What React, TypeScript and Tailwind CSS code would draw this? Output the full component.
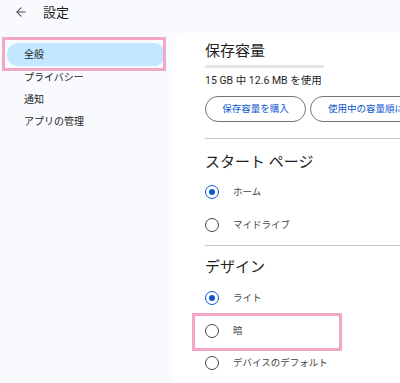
import { ArrowLeft } from "lucide-react";

const font = { fontFamily: '"Roboto", "Noto Sans CJK JP", sans-serif' };

function Radio({ label, checked }: { label: string; checked?: boolean }) {
  return (
    <div className="flex h-[32.5px] items-center">
      {checked ? (
        <span className="flex h-[14px] w-[14px] items-center justify-center rounded-full border-[1.8px] border-[#0b57d0]">
          <span className="h-[6px] w-[6px] rounded-full bg-[#0b57d0]" />
        </span>
      ) : (
        <span className="h-[14px] w-[14px] rounded-full border-[1.8px] border-[#444746]" />
      )}
      <span className="ml-[14px] text-[9.5px] text-[#444746]">{label}</span>
    </div>
  );
}

export default function App() {
  const nav = ["プライバシー", "通知", "アプリの管理"];

  return (
    <div className="h-[383px] w-[400px] overflow-hidden bg-[#f8fafd] text-[#1f1f1f]" style={font}>
      {/* header */}
      <div className="flex h-[24px] items-center pl-[14px]">
        <ArrowLeft size={14} strokeWidth={1.8} className="text-[#444746]" />
        <span className="ml-[15px] text-[13px] leading-none">設定</span>
      </div>

      <div className="mt-[9px] flex">
        {/* sidebar */}
        <div className="relative w-[172px] shrink-0 pt-[10px]">
          <div className="mx-[7px] flex h-[23px] items-center rounded-full bg-[#c2e7ff] pl-[17px] text-[10px]">
            全般
          </div>
          {nav.map((n) => (
            <div key={n} className="flex h-[22px] items-center pl-[24px] text-[10px]">
              {n}
            </div>
          ))}
          <span className="absolute left-[2px] top-[4px] h-[34px] w-[164px] border-[3px] border-[#f2a7c7]" />
        </div>

        {/* card */}
        <div className="h-[360px] min-w-0 flex-1 overflow-hidden rounded-tl-[14px] bg-white pl-[33px] pt-[8px]">
          <div className="w-[400px]">
            <div className="text-[15px] leading-[20px]">保存容量</div>
            <div className="mt-[4px] h-[3px] w-[119px] rounded-full bg-[#e3e3e3]" />
            <div className="mt-[6px] text-[10.5px] leading-[14px] text-[#1f1f1f]">15 GB 中 12.6 MB を使用</div>
            <div className="mt-[8px] flex gap-[4px]">
              <button className="flex h-[26px] w-[101px] items-center justify-center whitespace-nowrap rounded-full border border-[#747775] text-[9.5px] text-[#0b57d0]">
                保存容量を購入
              </button>
              <button className="flex h-[26px] items-center whitespace-nowrap rounded-full border border-[#747775] px-[17px] text-[9.5px] text-[#0b57d0]">
                使用中の容量順に表示
              </button>
            </div>
            <div className="mt-[16px] border-t border-[#c4c7c5]" />

            <div className="mt-[13px] text-[15px] leading-[20px]">スタート ページ</div>
            <div className="mt-[4px]">
              <Radio label="ホーム" checked />
              <Radio label="マイドライブ" />
            </div>
            <div className="mt-[4px] border-t border-[#c4c7c5]" />

            <div className="mt-[11px] text-[15px] leading-[20px]">デザイン</div>
            <div className="mt-[5px]">
              <Radio label="ライト" checked />
              <div className="relative">
                <Radio label="暗" />
                <span className="absolute -left-[13px] -top-[2px] h-[38px] w-[150px] border-[3px] border-[#f2a7c7]" />
              </div>
              <Radio label="デバイスのデフォルト" />
            </div>
          </div>
        </div>
      </div>
    </div>
  );
}
